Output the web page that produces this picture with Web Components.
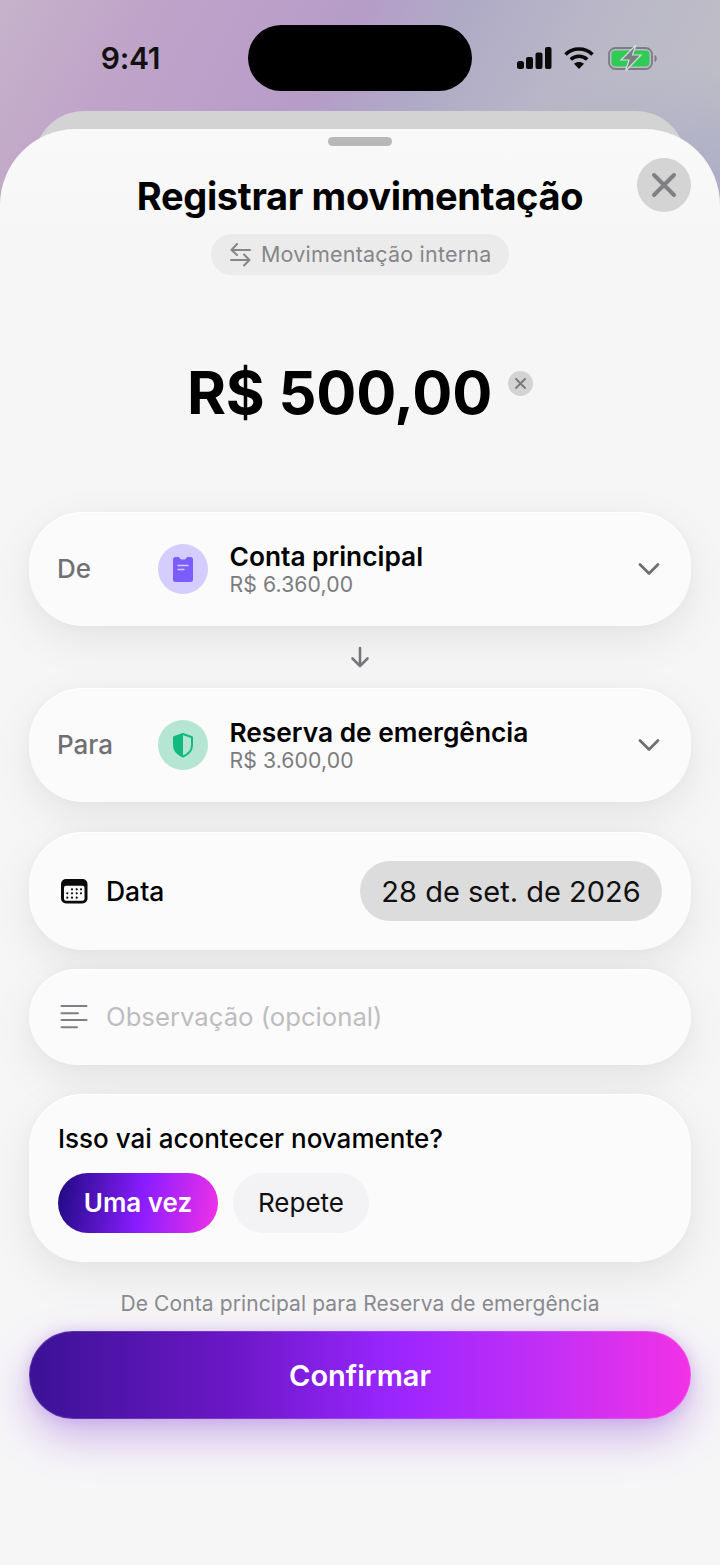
<!DOCTYPE html>
<html lang="pt-BR"><head><meta charset="utf-8"><title>Registrar movimentação</title>
<style>
html,body{margin:0;padding:0;width:720px;height:1565px;overflow:hidden;background:#f6f6f7;font-family:Inter,"Liberation Sans",sans-serif;color:#000}
</style></head><body>
<app-screen>
  <status-bar slot="status"></status-bar>
  <move-sheet></move-sheet>
</app-screen>
<script>
function def(name, html, setup){
  customElements.define(name, class extends HTMLElement{
    constructor(){super();const r=this.attachShadow({mode:'open'});r.innerHTML=html;}
    connectedCallback(){ if(setup) setup(this); }
  });
}
def('app-screen',`<style>
:host{display:block;width:720px;height:1565px;overflow:hidden;position:relative;
background:radial-gradient(ellipse 260px 130px at 720px 190px,#acacc6 0,rgba(172,172,198,0) 100%) no-repeat,linear-gradient(118deg,#c6b3ca 0%,#c0a5c9 16%,#bb9fc9 32%,#b59dc8 44%,#afabc6 56%,#b9b7c7 72%,#c1c1c7 100%) 0 0/720px 230px no-repeat}
</style><slot name="status"></slot><slot></slot>`);

def('status-bar',`<style>
:host{display:grid;grid-template-columns:248px 224px 248px;height:111px;box-sizing:border-box;padding-top:25px}
.time{font:600 30px/1 Inter,sans-serif;letter-spacing:-.3px;color:#111;text-align:center;padding:18px 0 0 13px}
.island{width:224px;height:66px;border-radius:33px;background:#000}
.icons{display:flex;align-items:flex-start;gap:12px;padding:22px 0 0 44px}
svg{display:block}
</style>
<div class="time">9:41</div><div class="island"></div>
<div class="icons">
<svg width="36" height="22" viewBox="0 0 36 22"><g fill="#0a0a0a"><rect x="1" y="14" width="7" height="8" rx="2.5"/><rect x="10" y="10" width="7" height="12" rx="2"/><rect x="19.5" y="5.500" width="7" height="16.500" rx="2"/><rect x="29" y="0" width="6.500" height="22" rx="2"/></g></svg>
<svg width="30" height="22" viewBox="0 0 30 22" fill="none" stroke="#0a0a0a" stroke-width="3.600"><path d="M1.500 7.500C9 .2 21 .2 28.500 7.500"/><path d="M6.800 12.500c4.600-4.300 11.800-4.300 16.400 0"/><path d="M15 22l-5-5.200c2.800-2.300 7.200-2.300 10 0z" fill="#0a0a0a" stroke="none"/></svg>
<svg width="50" height="26" viewBox="0 0 50 26" style="margin:-2px 0 0 2px"><rect x="1" y="3" width="43" height="21" rx="6.500" fill="none" stroke="#7c7c84" stroke-width="1.800"/><rect x="3.500" y="5.500" width="38" height="16" rx="4" fill="#30cb55"/><path d="M46.500 10c1.500.6 2.200 2 2.200 3.500s-.7 2.900-2.200 3.500z" fill="#7c7c84"/><path d="M28 0L13 15h8l-3.500 11L33 10h-8.500z" fill="#7c7c84" stroke="#cfe0d5" stroke-width="1.200"/></svg>
</div>`);

def('move-sheet',`<style>
:host{display:block;position:relative;height:1454px}
.back{position:absolute;left:34px;right:34px;top:0;height:120px;border-radius:50px 50px 0 0;background:#d3d3d3}
.front{position:absolute;left:0;right:0;top:18px;bottom:0;border-radius:76px 76px 0 0;
background:linear-gradient(180deg,#f9f9f9 0,#f6f6f7 120px);display:flex;flex-direction:column;align-items:stretch;box-sizing:border-box;padding:8px 29px 0}
.handle{align-self:center;width:64px;height:9px;border-radius:5px;background:#b8b8b8;flex:none}
</style>
<div class="back"></div>
<div class="front">
<div class="handle"></div>
<sheet-header></sheet-header>
<amount-display></amount-display>
<form-stack></form-stack>
</div>`);

def('sheet-header',`<style>
:host{display:flex;flex-direction:column;align-items:center;position:relative;padding-top:28px}
h1{margin:0;font:700 38px/44px Inter,sans-serif;letter-spacing:-.33px;color:#000;white-space:nowrap}
.close{position:absolute;right:0;top:12px;width:54px;height:54px;border-radius:50%;background:#d4d4d4;display:flex;align-items:center;justify-content:center}
.pill{margin-top:16px;height:41px;box-sizing:border-box;width:298px;border-radius:21px;background:#ebebeb;display:flex;align-items:center;gap:10px;padding-left:19px;font:400 21.500px/1 Inter,sans-serif;color:#86868a;letter-spacing:.2px;white-space:nowrap}
svg{display:block;flex:none}
</style>
<h1>Registrar movimentação</h1>
<div class="close"><svg width="26" height="26" viewBox="0 0 26 26" fill="none" stroke="#808084" stroke-width="4" stroke-linecap="round"><path d="M3 3l20 20M23 3L3 23"/></svg></div>
<div class="pill"><svg width="21" height="24" viewBox="0 0 21 24" fill="none" stroke="#86868a" stroke-width="2" stroke-linecap="round" stroke-linejoin="round"><path d="M20 7H1.500M7 1L1.500 7l5.500 5"/><path d="M1 17h18.500M14 11.500l5.500 5.500-5.500 5.500"/></svg><span>Movimentação interna</span></div>`);

def('amount-display',`<style>
:host{display:flex;justify-content:center;height:237px;box-sizing:border-box;padding:76px 0 0 0;position:relative}
.wrap{display:flex;align-items:flex-start}
.v{font:700 59.500px/82px Inter,sans-serif;letter-spacing:-.2px;white-space:nowrap;color:#000}
.x{width:25px;height:25px;border-radius:50%;background:#d3d3d3;display:flex;align-items:center;justify-content:center;margin:20px 0 0 16px}
svg{display:block}
</style>
<div class="wrap"><span class="v">R$ 500,00</span><span class="x"><svg width="11" height="11" viewBox="0 0 11 11" fill="none" stroke="#77777b" stroke-width="1.800" stroke-linecap="round"><path d="M1 1l9 9M10 1l-9 9"/></svg></span></div>`);

const cardCss=`:host{display:block}
.card{background:#fbfbfb;box-shadow:0 14px 44px rgba(0,0,0,.08),0 0 12px rgba(0,0,0,.025),inset 0 1px 0 #fff;border-radius:54px;box-sizing:border-box}`;

def('form-stack',`<style>
:host{display:flex;flex-direction:column}
.arrow{height:62px;display:flex;align-items:center;justify-content:center}
svg{display:block}
.gap30{height:30px}.gap19{height:19px}.gap29{height:29px}
.hint{font:400 21px/26px Inter,sans-serif;color:#8a8a8e;text-align:center;margin:28px 0 15px;letter-spacing:.1px;white-space:nowrap;padding-top:1px;margin-bottom:14px}
</style>
<account-row label="De" name="Conta principal" value="R$ 6.360,00" kind="wallet"></account-row>
<div class="arrow"><svg width="20" height="22" viewBox="0 0 20 22" fill="none" stroke="#77777b" stroke-width="2.600" stroke-linecap="round" stroke-linejoin="round"><path d="M10 2v18M2.500 12.500L10 20l7.500-7.500"/></svg></div>
<account-row label="Para" name="Reserva de emergência" value="R$ 3.600,00" kind="shield"></account-row>
<div class="gap30"></div>
<date-row></date-row>
<div class="gap19"></div>
<note-row></note-row>
<div class="gap29"></div>
<repeat-card></repeat-card>
<div class="hint">De Conta principal para Reserva de emergência</div>
<confirm-button></confirm-button>`);

const wallet=`<svg width="20" height="25" viewBox="0 0 20 25"><path fill="#7a5cff" d="M2.500 0H6c.5 3.400 7.500 3.400 8 0h3.500A2.500 2.500 0 0 1 20 2.500v20a2.500 2.500 0 0 1-2.500 2.500h-15A2.500 2.500 0 0 1 0 22.500v-20A2.500 2.500 0 0 1 2.500 0z"/><path d="M5 8.500h10M5 12.500h6" stroke="#d3cbff" stroke-width="1.400" stroke-linecap="round"/></svg>`;
const shield=`<svg width="20" height="25" viewBox="0 0 20 25"><path d="M10 1L19 4.200v8.300c0 5-3.800 8.800-9 11-5.200-2.200-9-6-9-11V4.200z" fill="none" stroke="#12b981" stroke-width="2" stroke-linejoin="round"/><path d="M10 1L1 4.200v8.300c0 5 3.800 8.800 9 11z" fill="#12b981"/></svg>`;

def('account-row',`<style>${cardCss}
.card{height:114px;display:flex;align-items:center;padding:0 31px 0 29px}
.l{width:100px;flex:none;font:500 26px/1 Inter,sans-serif;color:#707074;margin-left:-1px;margin-right:1px}
.ic{width:50px;height:50px;border-radius:50%;display:flex;align-items:center;justify-content:center;flex:none;margin-right:22px}
.t{flex:1;min-width:0}
.n{font:600 26.300px/30px Inter,sans-serif;color:#000;white-space:nowrap;margin-left:-.5px}
.v{font:400 21.200px/24px Inter,sans-serif;color:#7b7b7f;white-space:nowrap;letter-spacing:.1px;margin-left:-.5px}
svg{display:block}
</style><div class="card"><div class="l"></div><div class="ic"></div><div class="t"><div class="n"></div><div class="v"></div></div>
<svg width="22" height="14" viewBox="0 0 22 14" fill="none" stroke="#6f6f73" stroke-width="2.800" stroke-linecap="round" stroke-linejoin="round"><path d="M2 2.500l9 9 9-9"/></svg></div>`,el=>{
  const r=el.shadowRoot;
  r.querySelector('.l').textContent=el.getAttribute('label');
  r.querySelector('.n').textContent=el.getAttribute('name');
  r.querySelector('.v').textContent=el.getAttribute('value');
  const ic=r.querySelector('.ic');
  const w=el.getAttribute('kind')==='wallet';
  ic.innerHTML=w?wallet:shield;
  ic.style.background=w?'#d4cdfd':'#b5e6d3';
});

def('date-row',`<style>${cardCss}
.card{height:118px;display:flex;align-items:center;padding:0 29px 0 30px}
.l{font:500 26.500px/1 Inter,sans-serif;flex:1;margin-left:17px}
.d{height:60px;width:302px;border-radius:30px;background:#dcdcdc;display:flex;align-items:center;justify-content:center;font:400 29px/1 Inter,sans-serif;color:#111;white-space:nowrap}
svg{display:block;flex:none}
</style><div class="card">
<svg width="30" height="30" viewBox="0 0 30 30"><rect x="2" y="3" width="26.500" height="24.500" rx="5" fill="#0b0b0b"/><rect x="5" y="9.700" width="20.500" height="15" rx="2" fill="#fbfbfb"/><g fill="#0b0b0b"><circle cx="13" cy="13.300" r="1.100"/><circle cx="17.700" cy="13.300" r="1.100"/><circle cx="22" cy="13.300" r="1.100"/><circle cx="8.300" cy="17.300" r="1.100"/><circle cx="13" cy="17.300" r="1.100"/><circle cx="17.700" cy="17.300" r="1.100"/><circle cx="22" cy="17.300" r="1.100"/><circle cx="8.300" cy="21.700" r="1.100"/><circle cx="13" cy="21.700" r="1.100"/><circle cx="17.700" cy="21.700" r="1.100"/></g></svg>
<div class="l">Data</div><div class="d">28 de set. de 2026</div></div>`);

def('note-row',`<style>${cardCss}
.card{height:96px;display:flex;align-items:center;padding:0 29px}
.p{font:400 25.700px/1 Inter,sans-serif;color:#bdbdc0;margin-left:18px;white-space:nowrap}
svg{display:block;flex:none}
</style><div class="card">
<svg width="30" height="26" viewBox="0 0 30 26" fill="none" stroke="#808084" stroke-width="2" stroke-linecap="round"><path d="M3.500 2h25M3.500 9.300h16.500M3.500 16h25M3.500 23.300h15.500"/></svg>
<div class="p">Observação (opcional)</div></div>`);

def('repeat-card',`<style>${cardCss}
.card{height:168px;padding:29px 29px 0}
.q{font:500 26px/32px Inter,sans-serif;color:#000;white-space:nowrap}
.chips{display:flex;gap:15px;margin-top:18px}
.c{height:60px;border-radius:30px;display:flex;align-items:center;justify-content:center;font:400 26px/1 Inter,sans-serif;white-space:nowrap}
.a{width:160px;color:#fff;font-weight:600;background:linear-gradient(100deg,#1d0a80 0%,#8a1dff 52%,#f232e6 100%)}
.b{width:136px;background:#f3f3f6;color:#111}
</style><div class="card"><div class="q">Isso vai acontecer novamente?</div><div class="chips"><div class="c a">Uma vez</div><div class="c b">Repete</div></div></div>`);

def('confirm-button',`<style>
:host{display:block}
.b{height:88px;border-radius:44px;background:linear-gradient(90deg,#3b1295 0%,#6a17c4 30%,#9a26ff 55%,#c22ff5 78%,#f232e6 100%);display:flex;align-items:center;justify-content:center;color:#fff;font:600 29px/1 Inter,sans-serif;box-shadow:0 18px 42px rgba(130,50,210,.34),0 0 14px rgba(130,50,210,.18),inset 0 0 0 1px rgba(255,255,255,.14)}
</style><div class="b">Confirmar</div>`);
</script>
</body></html>
